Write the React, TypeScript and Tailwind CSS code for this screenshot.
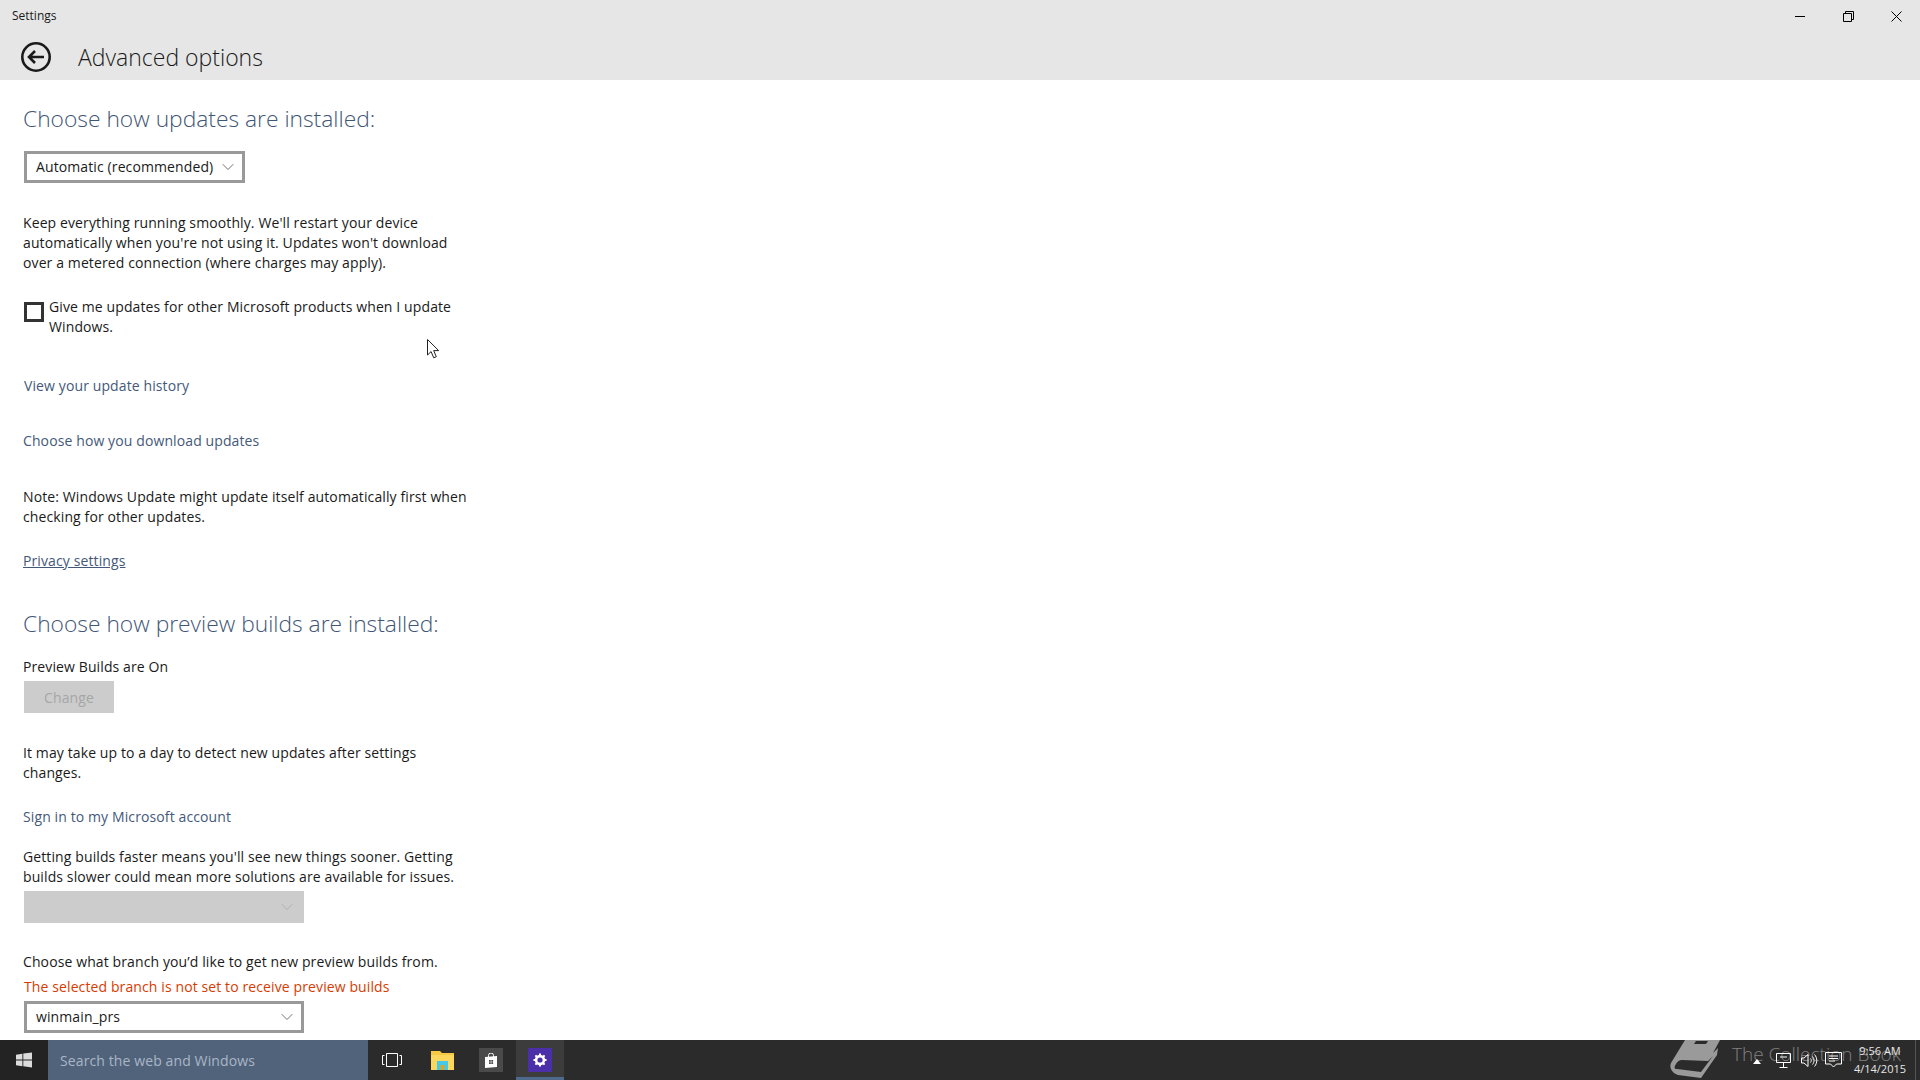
import React from 'react';
import { ChevronDown } from 'lucide-react';

const font = { fontFamily: '"Open Sans", sans-serif' };

const Heading = ({ children, className = '' }: { children: React.ReactNode; className?: string }) => (
  <h2 className={`ml-[23px] h-8 whitespace-nowrap text-[22.8px] font-light leading-8 text-[#3f5675] ${className}`}>{children}</h2>
);

const Text = ({ children, className = '' }: { children: React.ReactNode; className?: string }) => (
  <p className={`ml-[23px] whitespace-nowrap text-[14px] leading-5 tracking-[0.11px] text-[#1a1a1a] ${className}`}>{children}</p>
);

const LinkText = ({ children, className = '' }: { children: React.ReactNode; className?: string }) => (
  <a className={`block w-fit whitespace-nowrap text-[14px] leading-5 tracking-[0.11px] text-[#44597a] ${className}`}>{children}</a>
);

const Select = ({ label, className = '' }: { label: string; className?: string }) => (
  <div className={`ml-6 flex h-8 items-center justify-between border-[3px] border-[#999999] bg-white pl-[9px] pr-[4px] text-[14px] tracking-[0.11px] text-[#1a1a1a] ${className}`}>
    <span className="mb-[2px] whitespace-nowrap">{label}</span>
    <ChevronDown size={20} strokeWidth={1} className="text-[#555555]" />
  </div>
);

const BackIcon = () => (
  <svg width="30" height="30" viewBox="0 0 30 30" fill="none" stroke="#1a1a1a">
    <circle cx="15" cy="15" r="13.7" strokeWidth="2.6" />
    <path d="M23 15H8M14 9l-6 6 6 6" strokeWidth="2.6" />
  </svg>
);

const WinControls = () => (
  <div className="flex items-center">
    <div className="flex h-8 w-12 items-center justify-center">
      <div className="h-px w-[10px] bg-black" />
    </div>
    <div className="flex h-8 w-12 items-center justify-center">
      <svg width="11" height="11" viewBox="0 0 11 11" fill="none" stroke="#000">
        <path d="M.5 2.500h8v8h-8zM2.500 2.500v-2h8v8h-2" />
      </svg>
    </div>
    <div className="flex h-8 w-12 items-center justify-center">
      <svg width="11" height="11" viewBox="0 0 11 11" fill="none" stroke="#000">
        <path d="M.5.5l10 10M10.500.5l-10 10" />
      </svg>
    </div>
  </div>
);

const Cursor = () => (
  <svg className="absolute left-[427px] top-[339px]" width="13" height="20" viewBox="0 0 13 20">
    <path d="M.5.5v15.500l3.600-3.400 2.600 6.200 2.600-1.100-2.600-6.100h5z" fill="#fff" stroke="#222" strokeWidth="1" />
  </svg>
);

const Taskbar = () => (
  <footer className="relative flex h-10 shrink-0 items-stretch overflow-hidden bg-[#2b2b2b]">
    <div className="flex w-[48px] items-center justify-center bg-[#232323]">
      <svg width="16" height="16" viewBox="0 0 18 17" fill="#dcdcdc">
        <path d="M0 2.600L7.200 1.500V8H0zM8.200 1.300L18 0v8H8.200zM0 9h7.200v6.500L0 14.400zM8.200 9H18v8l-9.800-1.400z" />
      </svg>
    </div>
    <div className="flex w-[320px] items-center bg-[#51637b] pl-[12px] text-[14px] tracking-[0.11px] text-[#a9b6c6]">Search the web and Windows</div>
    <div className="flex w-[48px] items-center justify-center">
      <svg width="20" height="14" viewBox="0 0 20 14" fill="none" stroke="#fff">
        <path d="M4.500.5h11v13h-11zM2.500 2.500H.5v9h2M17.500 2.500h2v9h-2" />
      </svg>
    </div>
    <div className="flex w-[53px] items-center justify-center">
      <svg width="23" height="20" viewBox="0 0 23 20">
        <path d="M0 1h9l2 2h12v17H0z" fill="#f6c944" />
        <path d="M0 5h23v15H0z" fill="#fcd75d" />
        <path d="M6 11h11v9H6z" fill="#45c9e8" />
        <path d="M9.500 15h4v5h-4z" fill="#d8a52c" />
      </svg>
    </div>
    <div className="flex w-[44px] items-center justify-center">
      <div className="flex h-6 w-6 items-center justify-center bg-[#4a4a4a]">
        <svg width="12" height="15" viewBox="0 0 12 15">
          <path d="M3.500 4V2.500a2.500 2.500 0 0 1 5 0V4" fill="none" stroke="#fff" />
          <path d="M0 4l12-1v11l-12 1z" fill="#fff" />
          <path d="M4 7h1.800v1.800H4zM6.300 7h1.800v1.800H6.300zM4 9.300h1.800v1.800H4zM6.300 9.300h1.800v1.800H6.300z" fill="#4a4a4a" />
        </svg>
      </div>
    </div>
    <div className="ml-[3px] flex w-[48px] items-center justify-center border-b-[3px] border-[#4d6a8c] bg-[#3c3c3c] pt-[3px]">
      <div className="flex h-6 w-6 items-center justify-center bg-[#4b2fa8]">
        <svg width="14" height="14" viewBox="0 0 14 14">
          <circle cx="7" cy="7" r="3.900" fill="none" stroke="#fff" strokeWidth="2.600" />
          <path d="M7 .5v2.500M7 11v2.500M.5 7H3M11 7h2.500M2.400 2.400l1.800 1.800M9.800 9.800l1.800 1.800M11.600 2.400L9.800 4.200M4.200 9.800l-1.800 1.800" stroke="#fff" strokeWidth="2" />
        </svg>
      </div>
    </div>

    {/* watermark sits under the tray icons */}
    <svg className="absolute left-[1670px] top-0" width="50" height="40" viewBox="0 0 50 40" fill="#9a9a9a">
      <path d="M15 0H50L43 13L48 8L47 15L31 38L8 35C2 33-1 28 1 23Z" />
      <path d="M6 24C4 27 4 29 7 29L31 32L43 16L38 21L12 20C9 20 7 22 6 24Z" fill="#2b2b2b" />
      <path d="M26 1H38L36 4H24Z" fill="#2b2b2b" />
    </svg>
    <span className="absolute left-[1732px] top-[2px] whitespace-nowrap text-[19px] font-light leading-6 text-[#808080]">The Collection Book</span>

    <div className="relative ml-auto flex items-center text-white">
      <div className="flex w-[20px] justify-center pt-[3px]">
        <svg width="8" height="5" viewBox="0 0 8 5" fill="#fff"><path d="M4 0l4 5H0z" /></svg>
      </div>
      <div className="flex w-[32px] justify-center">
        <svg width="15" height="17" viewBox="0 0 15 17" fill="none" stroke="#fff">
          <path d="M.5 1.500h14v9H.5zM7.500 10.500v5M3.500 15.500h8M4 5h7" />
        </svg>
      </div>
      <div className="flex w-[20px] justify-center">
        <svg width="17" height="15" viewBox="0 0 17 15" fill="none" stroke="#fff">
          <path d="M.5 5v5h2.500l4 3.500v-12L3 5zM9.500 5.500c1 1.200 1 2.800 0 4M11.500 3.500c2 2.400 2 5.600 0 8M13.500 1.500c3 3.400 3 8.600 0 12" />
        </svg>
      </div>
      <div className="flex w-[28px] justify-center">
        <svg width="17" height="16" viewBox="0 0 17 16" fill="none" stroke="#fff">
          <path d="M.5.5h16v11.500h-5l-3 3-3-3h-5zM4 4h9M4 6.500h9M4 9h6" />
        </svg>
      </div>
      <div className="flex w-[66px] flex-col items-center text-[11px] leading-[18px] text-[#e6e6e6]">
        <span>9:56 AM</span>
        <span>4/14/2015</span>
      </div>
      <div className="ml-[2px] mr-[4px] h-full w-px bg-[#555555]" />
    </div>
  </footer>
);

export default function App() {
  return (
    <div className="relative flex h-[1080px] w-[1920px] flex-col overflow-hidden bg-white" style={font}>
      <header className="h-20 shrink-0 bg-[#e6e6e6]">
        <div className="flex h-8 items-center justify-between">
          <span className="ml-3 text-[12px] text-[#1a1a1a]">Settings</span>
          <WinControls />
        </div>
        <div className="flex h-[48px] items-start">
          <div className="ml-[21px] mt-[10px]"><BackIcon /></div>
          <h1 className="ml-[27px] mt-[9px] text-[23px] font-light leading-8 text-[#1a1a1a]">Advanced options</h1>
        </div>
      </header>

      <main className="flex-1 overflow-hidden pt-[23px]">
        <Heading>Choose how updates are installed:</Heading>
        <Select label="Automatic (recommended)" className="mt-4 w-[221px]" />
        <Text className="mt-[30px]">
          Keep everything running smoothly. We'll restart your device<br />
          automatically when you're not using it. Updates won't download<br />
          over a metered connection (where charges may apply).
        </Text>
        <div className="ml-6 mt-[24px] flex items-start gap-[5px]">
          <div className="mt-[5px] h-5 w-5 shrink-0 border-[3px] border-[#333333]" />
          <p className="whitespace-nowrap text-[14px] leading-5 tracking-[0.11px] text-[#1a1a1a]">
            Give me updates for other Microsoft products when I update<br />Windows.
          </p>
        </div>
        <LinkText className="ml-6 mt-[39px]">View your update history</LinkText>
        <LinkText className="ml-[23px] mt-[35px]">Choose how you download updates</LinkText>
        <Text className="mt-[36px]">
          Note: Windows Update might update itself automatically first when<br />
          checking for other updates.
        </Text>
        <LinkText className="ml-[23px] mt-[24px] underline">Privacy settings</LinkText>
        <Heading className="mt-[37px]">Choose how preview builds are installed:</Heading>
        <Text className="mt-[17px]">Preview Builds are On</Text>
        <button className="ml-6 mt-1 block h-8 w-[90px] bg-[#cccccc] text-[14px] tracking-[0.11px] text-[#a6a6a6]">Change</button>
        <Text className="mt-[30px]">
          It may take up to a day to detect new updates after settings<br />changes.
        </Text>
        <LinkText className="ml-[23px] mt-6">Sign in to my Microsoft account</LinkText>
        <Text className="mt-5">
          Getting builds faster means you'll see new things sooner. Getting<br />
          builds slower could mean more solutions are available for issues.
        </Text>
        <div className="ml-6 mt-1 flex h-8 w-[280px] items-center justify-end bg-[#cccccc] pr-[7px]">
          <ChevronDown size={20} strokeWidth={1} className="text-[#aaaaaa]" />
        </div>
        <Text className="mt-[29px]">Choose what branch you’d like to get new preview builds from.</Text>
        <p className="ml-6 mt-[5px] whitespace-nowrap text-[14px] leading-5 tracking-[0.11px] text-[#d83b01]">The selected branch is not set to receive preview builds</p>
        <Select label="winmain_prs" className="mt-1 w-[280px]" />
      </main>

      <Cursor />
      <Taskbar />
    </div>
  );
}
